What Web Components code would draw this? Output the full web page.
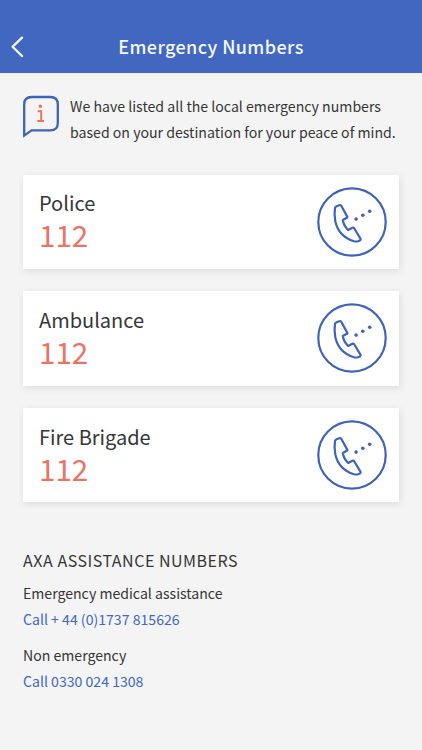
<!DOCTYPE html>
<html lang="en">
<head>
<meta charset="UTF-8">
<meta name="viewport" content="width=device-width, initial-scale=1.0">
<title>Emergency Numbers</title>
<style>
    :root {
        --blue: #4267c1;
        --line: #3f63b8;
        --coral: #ea7464;
        --ink: #363636;
    }

    body {
        margin: 0;
        min-height: 750px;
        background-color: #f4f4f4;
        color: var(--ink);
        font-family: "Noto Sans CJK SC", "Noto Sans", sans-serif;
    }

    main {
        display: flex;
        flex-direction: column;
        padding: 20px 23px 0;
    }

    .cards {
        display: flex;
        flex-direction: column;
        gap: 22.5px;
        margin-top: 29.5px;
    }
</style>
</head>
<body>
    <app-header>Emergency Numbers</app-header>
    <main>
        <info-note>
            <div>We have listed all the local emergency numbers</div>
            <div>based on your destination for your peace of mind.</div>
        </info-note>
        <div class="cards">
            <number-card number="112">Police</number-card>
            <number-card number="112">Ambulance</number-card>
            <number-card number="112">Fire Brigade</number-card>
        </div>
        <assistance-numbers>
            <span slot="title">AXA ASSISTANCE NUMBERS</span>
            <assistance-line call="Call + 44 (0)1737 815626">Emergency medical assistance</assistance-line>
            <assistance-line call="Call 0330 024 1308">Non emergency</assistance-line>
        </assistance-numbers>
    </main>

<script>
    class AppHeader extends HTMLElement {
        connectedCallback() {
            this.attachShadow({ mode: 'open' });
            this.shadowRoot.innerHTML = `
                <style>
                    :host {
                        display: block;
                        background-color: var(--blue);
                        color: #f5f8ff;
                    }

                    header {
                        display: grid;
                        grid-template-columns: 40px 1fr 40px;
                        align-items: center;
                        height: 54px;
                        padding-top: 19px;
                    }

                    svg {
                        display: block;
                        margin: 1px 0 0 10px;
                    }

                    h1 {
                        margin: 0;
                        font-size: 18px;
                        line-height: 26px;
                        font-weight: 500;
                        letter-spacing: 0.4px;
                        text-align: center;
                        white-space: nowrap;
                    }
                </style>
                <header>
                    <svg width="14" height="22" viewBox="0 0 14 22" fill="none" stroke="currentColor" stroke-width="2.3" stroke-linecap="round" stroke-linejoin="round">
                        <path d="M12 1.6 2.6 10.8 12 20"/>
                    </svg>
                    <h1><slot></slot></h1>
                </header>
            `;
        }
    }

    class InfoNote extends HTMLElement {
        connectedCallback() {
            this.attachShadow({ mode: 'open' });
            this.shadowRoot.innerHTML = `
                <style>
                    :host {
                        display: flex;
                        align-items: flex-start;
                        gap: 10px;
                    }

                    svg {
                        flex: none;
                        margin-top: 2px;
                    }

                    .text {
                        font-size: 14.13px;
                        line-height: 26px;
                        white-space: nowrap;
                    }
                </style>
                <svg width="37" height="44" viewBox="0 0 37 44" fill="none">
                    <path d="M1.2 40.6V9.4Q1.2 2 8.6 2H27.4Q34.8 2 34.8 9.4V27.9Q34.8 35.3 27.4 35.3H8.6Z" stroke="var(--line)" stroke-width="2.3"/>
                    <circle cx="17.4" cy="11.3" r="1.7" fill="var(--coral)"/>
                    <path d="M14.7 16.2H18.2V26M14.3 26.1H21" stroke="var(--coral)" stroke-width="2"/>
                </svg>
                <div class="text"><slot></slot></div>
            `;
        }
    }

    class NumberCard extends HTMLElement {
        connectedCallback() {
            this.attachShadow({ mode: 'open' });
            this.shadowRoot.innerHTML = `
                <style>
                    :host {
                        display: flex;
                        justify-content: space-between;
                        align-items: center;
                        box-sizing: border-box;
                        height: 94.3px;
                        padding: 0 12px 0 16px;
                        background-color: #fff;
                        box-shadow: 1px 2px 7px rgba(0, 0, 0, 0.1);
                    }

                    .label {
                        padding-bottom: 3px;
                    }

                    .name {
                        font-size: 20px;
                        line-height: 30px;
                    }

                    .number {
                        color: var(--coral);
                        font-size: 29.6px;
                        line-height: 34px;
                    }

                    svg {
                        display: block;
                    }
                </style>
                <div class="label">
                    <div class="name"><slot></slot></div>
                    <div class="number">${this.getAttribute('number')}</div>
                </div>
                <svg width="70" height="70" viewBox="0 0 70 70" fill="none" stroke="var(--line)" stroke-width="2.2" stroke-linejoin="round">
                    <circle cx="35" cy="35" r="33.7"/>
                    <path d="M19.6 19.2 22.2 18.2Q23.6 17.7 24.4 19L30.2 29.6Q30.6 30.4 29.8 30.8L25.8 33Q26.6 38.6 31.2 43L35.4 40.8Q36.5 40.3 37.2 41.3L43.4 51.6Q44 52.8 42.8 53.4L41 54.2Q39.4 54.8 37 54.2C27 51.2 20.4 43.6 18.3 34.2Q17 26.8 18 21Q18.3 19.7 19.6 19.2Z"/>
                    <g fill="var(--line)" stroke="none">
                        <circle cx="39.1" cy="32.1" r="1.8"/>
                        <circle cx="45.8" cy="28.2" r="1.8"/>
                        <circle cx="52.7" cy="24.3" r="1.8"/>
                    </g>
                </svg>
            `;
        }
    }

    class AssistanceNumbers extends HTMLElement {
        connectedCallback() {
            this.attachShadow({ mode: 'open' });
            this.shadowRoot.innerHTML = `
                <style>
                    :host {
                        display: flex;
                        flex-direction: column;
                        gap: 10px;
                        margin-top: 45px;
                    }

                    h2 {
                        margin: 0 0 -3px;
                        font-size: 16px;
                        line-height: 26px;
                        font-weight: 400;
                        letter-spacing: 0.52px;
                    }
                </style>
                <h2><slot name="title"></slot></h2>
                <slot></slot>
            `;
        }
    }

    class AssistanceLine extends HTMLElement {
        connectedCallback() {
            this.attachShadow({ mode: 'open' });
            this.shadowRoot.innerHTML = `
                <style>
                    :host {
                        display: block;
                        font-size: 14.1px;
                        line-height: 26px;
                    }

                    .call {
                        color: var(--blue);
                    }
                </style>
                <div><slot></slot></div>
                <div class="call">${this.getAttribute('call')}</div>
            `;
        }
    }

    customElements.define('app-header', AppHeader);
    customElements.define('info-note', InfoNote);
    customElements.define('number-card', NumberCard);
    customElements.define('assistance-numbers', AssistanceNumbers);
    customElements.define('assistance-line', AssistanceLine);
</script>
</body>
</html>
